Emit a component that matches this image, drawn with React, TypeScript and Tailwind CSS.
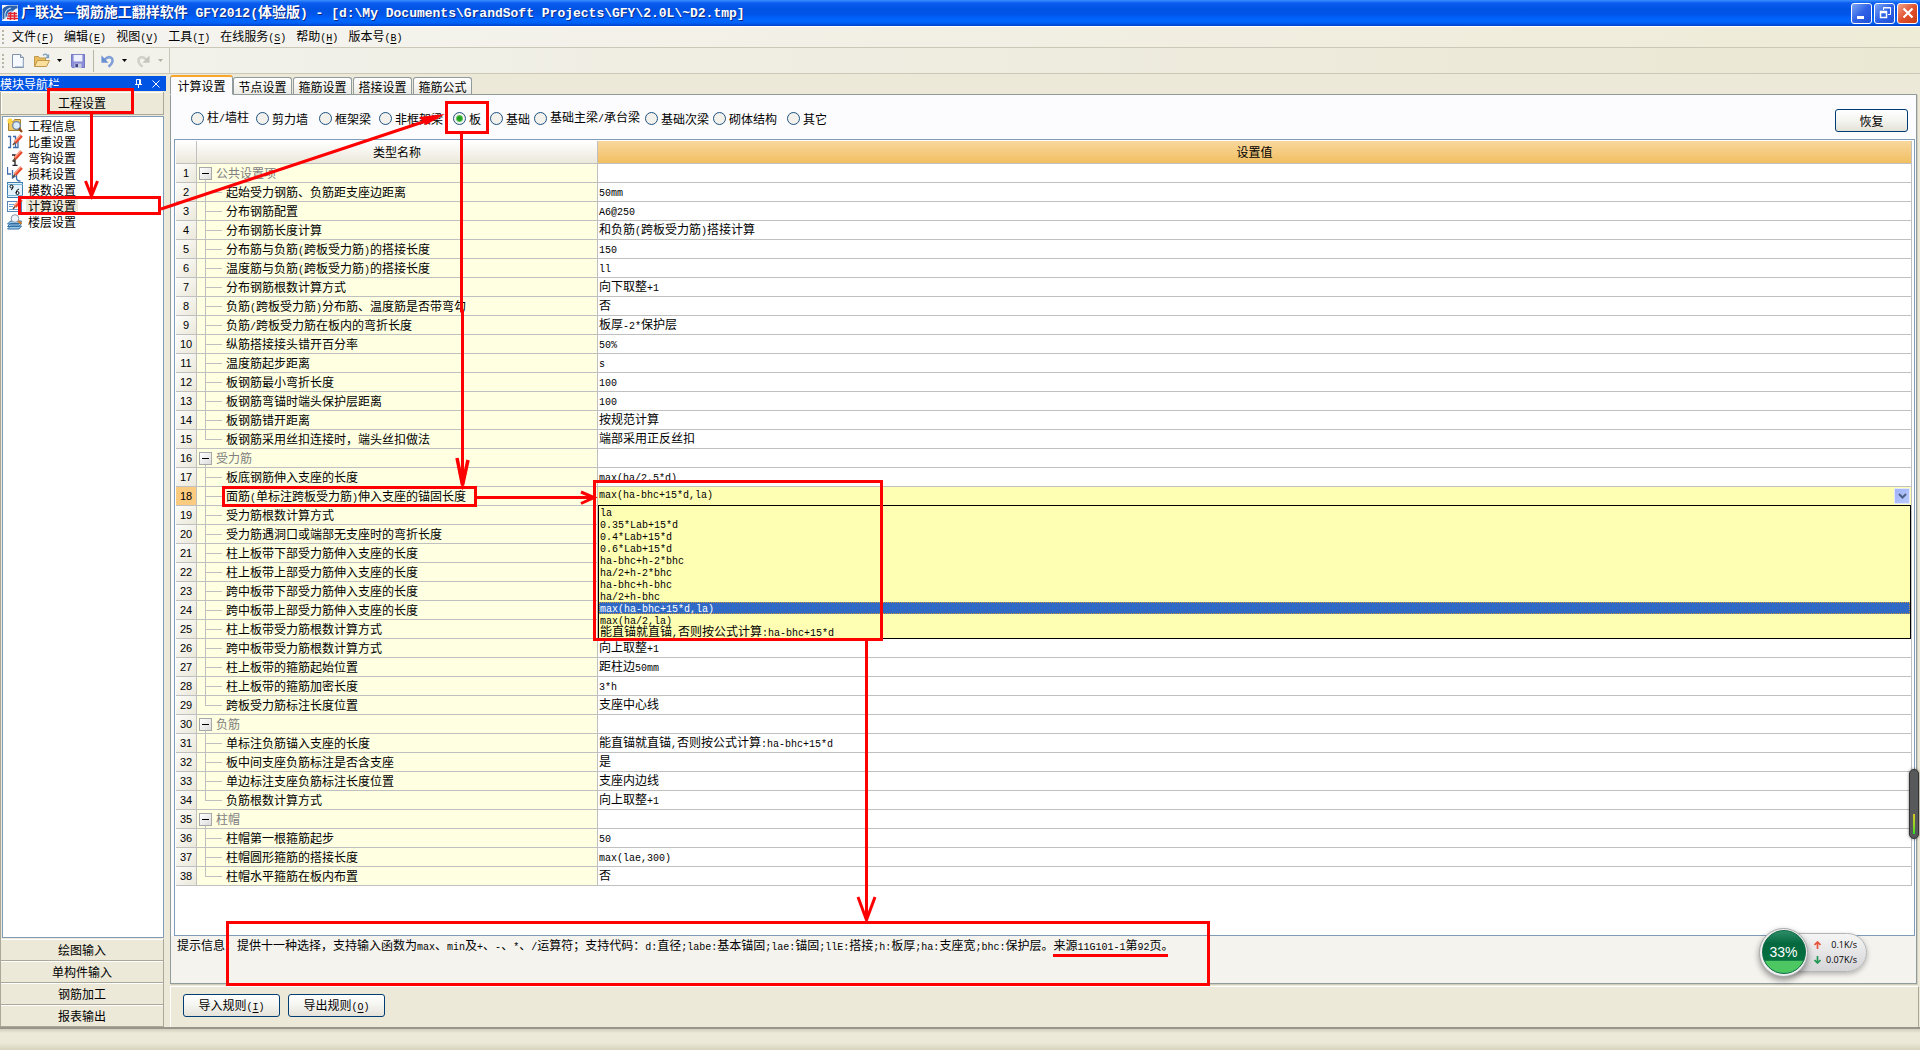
import React from "react";

/* Mixed text: half-width characters take half of a full-width character's advance. */
function T({ s, big = false }: { s: string; big?: boolean }) {
  return (
    <>
      {s.split(/([\x20-\x7e]+)/).map((part, i) =>
        i % 2 ? (
          <span
            key={i}
            className={
              big
                ? "text-[13px] font-['Liberation_Mono',monospace] whitespace-pre"
                : "text-[10px] font-['Liberation_Mono',monospace] whitespace-pre"
            }
          >
            {part}
          </span>
        ) : (
          part
        )
      )}
    </>
  );
}

/* Label followed by an underlined access key in brackets. */
function Keyed({ text, k }: { text: string; k: string }) {
  return (
    <>
      {text}
      <span className="text-[10px] font-['Liberation_Mono',monospace]">
        (<u className="underline-offset-2">{k}</u>)
      </span>
    </>
  );
}

type Row = { name: string; value?: string; group?: boolean };

const rows: Row[] = [
  { name: "公共设置项", group: true },
  { name: "起始受力钢筋、负筋距支座边距离", value: "50mm" },
  { name: "分布钢筋配置", value: "A6@250" },
  { name: "分布钢筋长度计算", value: "和负筋(跨板受力筋)搭接计算" },
  { name: "分布筋与负筋(跨板受力筋)的搭接长度", value: "150" },
  { name: "温度筋与负筋(跨板受力筋)的搭接长度", value: "ll" },
  { name: "分布钢筋根数计算方式", value: "向下取整+1" },
  { name: "负筋(跨板受力筋)分布筋、温度筋是否带弯勾", value: "否" },
  { name: "负筋/跨板受力筋在板内的弯折长度", value: "板厚-2*保护层" },
  { name: "纵筋搭接接头错开百分率", value: "50%" },
  { name: "温度筋起步距离", value: "s" },
  { name: "板钢筋最小弯折长度", value: "100" },
  { name: "板钢筋弯锚时端头保护层距离", value: "100" },
  { name: "板钢筋错开距离", value: "按规范计算" },
  { name: "板钢筋采用丝扣连接时，端头丝扣做法", value: "端部采用正反丝扣" },
  { name: "受力筋", group: true },
  { name: "板底钢筋伸入支座的长度", value: "max(ha/2,5*d)" },
  { name: "面筋(单标注跨板受力筋)伸入支座的锚固长度", value: "max(ha-bhc+15*d,la)" },
  { name: "受力筋根数计算方式" },
  { name: "受力筋遇洞口或端部无支座时的弯折长度" },
  { name: "柱上板带下部受力筋伸入支座的长度" },
  { name: "柱上板带上部受力筋伸入支座的长度" },
  { name: "跨中板带下部受力筋伸入支座的长度" },
  { name: "跨中板带上部受力筋伸入支座的长度" },
  { name: "柱上板带受力筋根数计算方式" },
  { name: "跨中板带受力筋根数计算方式", value: "向上取整+1" },
  { name: "柱上板带的箍筋起始位置", value: "距柱边50mm" },
  { name: "柱上板带的箍筋加密长度", value: "3*h" },
  { name: "跨板受力筋标注长度位置", value: "支座中心线" },
  { name: "负筋", group: true },
  { name: "单标注负筋锚入支座的长度", value: "能直锚就直锚,否则按公式计算:ha-bhc+15*d" },
  { name: "板中间支座负筋标注是否含支座", value: "是" },
  { name: "单边标注支座负筋标注长度位置", value: "支座内边线" },
  { name: "负筋根数计算方式", value: "向上取整+1" },
  { name: "柱帽", group: true },
  { name: "柱帽第一根箍筋起步", value: "50" },
  { name: "柱帽圆形箍筋的搭接长度", value: "max(lae,300)" },
  { name: "柱帽水平箍筋在板内布置", value: "否" },
];

const SELECTED = 17;

const options = [
  "la",
  "0.35*Lab+15*d",
  "0.4*Lab+15*d",
  "0.6*Lab+15*d",
  "ha-bhc+h-2*bhc",
  "ha/2+h-2*bhc",
  "ha-bhc+h-bhc",
  "ha/2+h-bhc",
  "max(ha-bhc+15*d,la)",
  "max(ha/2,la)",
  "能直锚就直锚,否则按公式计算:ha-bhc+15*d",
];

const menus: [string, string][] = [
  ["文件", "F"],
  ["编辑", "E"],
  ["视图", "V"],
  ["工具", "T"],
  ["在线服务", "S"],
  ["帮助", "H"],
  ["版本号", "B"],
];

const tabs = ["计算设置", "节点设置", "箍筋设置", "搭接设置", "箍筋公式"];
const radios = ["柱/墙柱", "剪力墙", "框架梁", "非框架梁", "板", "基础", "基础主梁/承台梁", "基础次梁", "砌体结构", "其它"];

const pencil = (
  <>
    <path d="M14.500 1.500 8 8.500" stroke="#e8492c" strokeWidth="3.500" />
    <path d="M13.500 1 7.500 7.500" stroke="#ffb199" strokeWidth="1.200" />
    <path d="M8 8.500 6 11" stroke="#6b4a2c" strokeWidth="1.500" />
  </>
);

const navItems: { label: string; icon: React.ReactNode }[] = [
  {
    label: "工程信息",
    icon: (
      <>
        <path d="M1.500 3.500h5l1-2h6v11h-12z" fill="#f0c863" stroke="#a8802c" />
        <path d="M0 3h6M3 0v6M1 1l4 4M5 1 1 5" stroke="#ffd640" strokeWidth="1.200" />
        <circle cx="9.500" cy="7.500" r="3.800" fill="#dcebfb" stroke="#6f87a4" strokeWidth="1.300" />
        <path d="m12 10.500 3 3.500" stroke="#8c4a18" strokeWidth="2.200" />
      </>
    ),
  },
  {
    label: "比重设置",
    icon: (
      <>
        <path d="M1 2.500h2.500v11H1M6 2.500h2.500v11H6M11 7v6.500H9" fill="none" stroke="#3c6cab" strokeWidth="1.300" />
        {pencil}
      </>
    ),
  },
  {
    label: "弯钩设置",
    icon: (
      <>
        <path d="M5 5h3v10M5.500 15.500h5M5.500 11h3" fill="none" stroke="#222" strokeWidth="1.300" />
        {pencil}
      </>
    ),
  },
  {
    label: "损耗设置",
    icon: (
      <>
        <path d="M0.500 1v7h3.500M5.500 4v8l3-2M9.500 8v4q0 3 4 3" fill="none" stroke="#3c6cab" strokeWidth="1.300" />
        {pencil}
      </>
    ),
  },
  {
    label: "模数设置",
    icon: (
      <>
        <rect x="0.500" y="0.500" width="15" height="15" fill="#e4f3fb" stroke="#3d7fae" />
        <path d="M0 2.500h16M0 13.500h16" stroke="#77b4d8" />
        <circle cx="4.500" cy="4.500" r="1.500" fill="none" stroke="#111" />
        <path d="M6 4.500q0 3-2 3.500M12 7q-3 1-3 4" fill="none" stroke="#111" />
        <circle cx="10.500" cy="11" r="1.500" fill="none" stroke="#111" />
      </>
    ),
  },
  {
    label: "计算设置",
    icon: (
      <>
        <rect x="0.500" y="3.500" width="14" height="10" fill="#fff" stroke="#5585bd" />
        <path d="M2 6.500h5M2 8.500h4M2 11.500h10" stroke="#6f9fd4" />
        {pencil}
      </>
    ),
  },
  {
    label: "楼层设置",
    icon: (
      <>
        <path d="m0.500 15 3-3h11l-2.500 3zM0.500 12.500l3-3h11l-2.500 3zM0.500 10l3-3h11l-2.500 3z" fill="#9fcbe8" stroke="#2f6fa4" />
        <circle cx="8" cy="4.500" r="3.800" fill="#eef4fb" stroke="#8796a8" />
        <path d="m11 7 3.500 2.500" stroke="#d08030" strokeWidth="2.200" />
      </>
    ),
  },
];

function Glyph({ children, size = 16 }: { children: React.ReactNode; size?: number }) {
  return (
    <svg width={size} height={size} viewBox="0 0 16 16" className="block shrink-0" aria-hidden="true">
      {children}
    </svg>
  );
}

function Caret({ muted = false }: { muted?: boolean }) {
  return (
    <svg width="5" height="3" viewBox="0 0 5 3" aria-hidden="true" className="block">
      <path d="M0 0h5L2.500 3z" fill={muted ? "#b5b2a3" : "#000"} />
    </svg>
  );
}

function TitleBar() {
  const ctl =
    "grid size-[21px] place-items-center rounded-[3px] border border-white bg-gradient-to-br from-[#7ea4f4] via-[#2f62e6] to-[#1f50d8]";
  return (
    <header className="flex h-[26px] items-center bg-[linear-gradient(#3b90ff_0,#0b5df0_3px,#0054e3_9px,#0055ea_14px,#0066ff_20px,#0061f5_23px,#0040c8_26px)] pr-0.5 pl-0.5">
      <Glyph>
        <rect width="16" height="16" fill="#f7f8fb" />
        <path d="M0.500 15V4Q3 0.500 8 0.500h7.500v3H14" fill="#2b62ae" />
        <path d="M3 14V9q1-5 6-6M5.500 14v-4q1-4 5-4" stroke="#b9dcf5" strokeWidth="1.200" fill="none" />
        <path d="M6 8.500h9M5.500 11h10M5 13.500h11M8.500 7v8M12.500 7v8" stroke="#e0202c" strokeWidth="1.400" />
      </Glyph>
      <h1 className="ml-[3px] flex-1 pb-0.5 text-[14px] leading-[18px] font-bold whitespace-nowrap text-white [text-shadow:1px_1px_0_#0a2a86]">
        <T big s={"广联达—钢筋施工翻样软件 GFY2012(体验版) - [d:\\My Documents\\GrandSoft Projects\\GFY\\2.0L\\~D2.tmp]"} />
      </h1>
      <div className="flex gap-0.5">
        <button type="button" aria-label="最小化" className={ctl}>
          <Glyph>
            <path d="M3 11h7v3H3z" fill="#fff" />
          </Glyph>
        </button>
        <button type="button" aria-label="还原" className={ctl}>
          <Glyph>
            <path d="M6.500 5V2.500h7v7H11M6 3h8" fill="none" stroke="#fff" />
            <path d="M3.500 6.500h6v6h-6zM3 7.500h7" fill="none" stroke="#fff" strokeWidth="1.500" />
          </Glyph>
        </button>
        <button
          type="button"
          aria-label="关闭"
          className="grid size-[21px] place-items-center rounded-[3px] border border-white bg-gradient-to-br from-[#f0a088] via-[#e1512c] to-[#c83c14]"
        >
          <Glyph>
            <path d="m3.500 3.500 9 9m0-9-9 9" stroke="#fff" strokeWidth="2.200" />
          </Glyph>
        </button>
      </div>
    </header>
  );
}

function Grip() {
  return (
    <span className="flex w-[10px] flex-col items-center gap-0.5 self-center pr-1" aria-hidden="true">
      {[0, 1, 2, 3].map((i) => (
        <span key={i} className="size-[2px] bg-[#b8b5a4]" />
      ))}
    </span>
  );
}

function MenuBar() {
  return (
    <nav className="flex h-[22px] items-center border-t border-b border-t-white border-b-[#cbc8b8] bg-gradient-to-r from-[#f5f4f1] to-[#eeebd7]">
      <Grip />
      <div className="flex gap-[10px] pl-0.5">
        {menus.map(([t, k]) => (
          <button key={k} type="button" className="leading-[18px] whitespace-nowrap">
            <Keyed text={t} k={k} />
          </button>
        ))}
      </div>
    </nav>
  );
}

function ToolBar() {
  return (
    <div className="flex h-[26px] border-b border-[#cbc8b8] bg-gradient-to-r from-[#f3f2ec] to-[#eae7d3]">
      <div className="flex w-[170px] items-center border-r border-[#cbc8b8]">
        <Grip />
        <button type="button" aria-label="新建" className="w-[24px]">
          <Glyph>
            <path d="M2.500 1.500h8l3 3v10h-11z" fill="#f6faff" stroke="#8192ab" />
            <path d="M10.500 1.500v3h3" fill="#cfdbea" stroke="#8192ab" />
            <path d="M5 13.500h8v-7" stroke="#b9c9de" fill="none" />
          </Glyph>
        </button>
        <button type="button" aria-label="打开" className="w-[23px]">
          <Glyph>
            <path d="M0.500 13.500v-10h4l1 1.500h6v3" fill="#e9bd5c" stroke="#c09a4c" />
            <path d="m0.500 13.500 3-6h12l-3 6z" fill="#fbdf9c" stroke="#c09a4c" />
            <path d="M9 2.500q3-3 5 1m0.500-2v3h-3" fill="none" stroke="#7f9fbf" strokeWidth="1.300" />
          </Glyph>
        </button>
        <button type="button" aria-label="打开选项" className="w-[14px]">
          <Caret />
        </button>
        <button type="button" aria-label="保存" className="w-[22px]">
          <Glyph size={14}>
            <path d="M0.500 0.500h15v15h-14l-1-1z" fill="#8a8ed8" stroke="#6569bd" />
            <path d="M3 1h10v7.500H3z" fill="#eef1fb" />
            <path d="M4 11h8v5H4z" fill="#c6c9de" />
            <path d="M5 11.500h3V15H5z" fill="#3f4388" />
          </Glyph>
        </button>
        <span className="mr-[7px] h-[22px] w-px bg-[#b9b6a6]" />
        <button type="button" aria-label="撤销" className="w-[21px]">
          <Glyph size={14}>
            <path d="M4 6.500q5-5 8.500-1.500 2.500 5-4 9.500" fill="none" stroke="#7f9fd6" strokeWidth="2.800" />
            <path d="M0.500 1.500v8.500h8z" fill="#6a90d2" />
          </Glyph>
        </button>
        <button type="button" aria-label="撤销选项" className="w-[14px]">
          <Caret />
        </button>
        <button type="button" aria-label="重做" className="w-[22px]" disabled>
          <Glyph size={14}>
            <path d="M12 6.500q-5-5-8.500-1.500-2.500 5 4 9.500" fill="none" stroke="#d2d0c8" strokeWidth="2.800" />
            <path d="M15.500 1.500v8.500h-8z" fill="#c6c4bb" />
          </Glyph>
        </button>
        <button type="button" aria-label="重做选项" disabled>
          <Caret muted />
        </button>
      </div>
    </div>
  );
}

function Sidebar() {
  return (
    <aside className="flex w-[166px] shrink-0 flex-col pt-0.5">
      <div className="flex h-[15px] items-center bg-[#0054e3] text-white">
        <h2 className="flex-1 leading-[15px]">模块导航栏</h2>
        <button type="button" aria-label="固定" className="mr-[10px]">
          <svg width="7" height="9" viewBox="0 0 7 9" className="block" aria-hidden="true">
            <path d="M1.500 5V0.500h4V5M0 5.500h7M3.500 5.500V9M4.500 1v4" fill="none" stroke="#fff" />
          </svg>
        </button>
        <button type="button" aria-label="关闭导航栏" className="mr-[6px]">
          <svg width="8" height="8" viewBox="0 0 8 8" className="block" aria-hidden="true">
            <path d="m0.500 0.500 7 7m0-7-7 7" stroke="#fff" />
          </svg>
        </button>
      </div>
      <div className="mt-px mr-0.5 flex flex-1 flex-col border-l border-[#aca899]">
        <button
          type="button"
          className="h-[23px] border-r border-b border-r-[#aca899] border-b-[#aca899] bg-[#ece9d8] text-center leading-[22px] shadow-[inset_1px_1px_0_#fff]"
        >
          工程设置
        </button>
        <ul className="mt-px ml-px flex-1 border border-[#7f9db9] bg-white pt-px">
          {navItems.map((n) => (
            <li key={n.label}>
              <button type="button" className="flex h-[16px] w-full items-center gap-[3px] pl-1">
                <Glyph>{n.icon}</Glyph>
                <span className={n.label === "计算设置" ? "bg-[#ece9d8] px-0.5 leading-[14px]" : "px-0.5 leading-[14px]"}>
                  {n.label}
                </span>
              </button>
            </li>
          ))}
        </ul>
        <div className="flex flex-col pt-px">
          {["绘图输入", "单构件输入", "钢筋加工", "报表输出"].map((t) => (
            <button
              key={t}
              type="button"
              className="h-[22px] border-r border-b border-[#aca899] text-center leading-[21px] shadow-[inset_0_1px_0_#fff]"
            >
              {t}
            </button>
          ))}
        </div>
      </div>
    </aside>
  );
}

function PushButton({ children, className }: { children: React.ReactNode; className: string }) {
  return (
    <button
      type="button"
      className={
        "h-[23px] rounded-[3px] border border-[#003c74] bg-gradient-to-b from-white via-[#f4f4f0] to-[#e4e2d8] text-center leading-[20px] " +
        className
      }
    >
      {children}
    </button>
  );
}

function TreeCell({ row, last }: { row: Row; last: boolean }) {
  if (row.group) {
    return (
      <div className="flex h-[18px] pl-0.5">
        <div className="flex w-[13px] flex-col">
          <button
            type="button"
            aria-label={"折叠" + row.name}
            className="mt-[3px] grid size-[13px] shrink-0 place-items-center border border-[#a8a8a8] bg-gradient-to-br from-white to-[#dcdcdc]"
          >
            <span className="h-px w-[7px] bg-black" />
          </button>
          <span className="ml-[6px] w-px flex-1 bg-[#c0c0c0]" />
        </div>
        <span className="pl-1 leading-[18px] text-[#808080]">{row.name}</span>
      </div>
    );
  }
  return (
    <div className="flex h-[18px] pl-2">
      <div className="flex w-[17px] flex-col" aria-hidden="true">
        <span className="h-[10px] border-b border-l border-[#c0c0c0]" />
        {last ? null : <span className="flex-1 border-l border-[#c0c0c0]" />}
      </div>
      <span className="pl-1 leading-[18px] whitespace-nowrap">
        <T s={row.name} />
      </span>
    </div>
  );
}

function ComboCell({ value }: { value: string }) {
  return (
    <div className="relative bg-[#ffffb4]">
      <div className="flex h-[18px] items-center">
        <input
          aria-label="面筋伸入支座的锚固长度"
          defaultValue={value}
          className="min-w-0 flex-1 bg-transparent pl-px font-['Liberation_Mono',monospace] text-[10px] leading-[16px] outline-none"
        />
        <button
          type="button"
          aria-label="展开选项"
          className="mr-px grid size-[16px] place-items-center border border-[#e4e9fb] bg-gradient-to-br from-[#9fb2f8] to-[#b9cbfb]"
        >
          <svg width="9" height="6" viewBox="0 0 9 6" className="block" aria-hidden="true">
            <path d="m1 1 3.500 3.500L8 1" fill="none" stroke="#4d6185" strokeWidth="2" />
          </svg>
        </button>
      </div>
      <ul role="listbox" aria-label="计算公式" className="absolute top-[18px] right-0 left-0 z-10 border border-black bg-[#ffffb4]">
        {options.map((o) => (
          <li
            key={o}
            role="option"
            aria-selected={o === value}
            className={
              o === value
                ? "h-[12px] bg-[#316ac5] pl-px leading-[10px] text-white outline-1 -outline-offset-1 outline-dotted outline-[#ce953a]"
                : "h-[12px] pl-px leading-[10px]"
            }
          >
            <T s={o} />
          </li>
        ))}
      </ul>
    </div>
  );
}

function SettingsTable() {
  return (
    <table className="w-full table-fixed border-separate border-spacing-0">
      <colgroup>
        <col className="w-[21px]" />
        <col className="w-[401px]" />
        <col />
      </colgroup>
      <thead>
        <tr className="h-[23px]">
          <td className="border-r border-b border-[#c0c0c0] bg-gradient-to-b from-white to-[#ebe8da] p-0" />
          <th className="border-r border-b border-[#c0c0c0] bg-gradient-to-b from-white to-[#ebe8da] p-0 font-normal">类型名称</th>
          <th className="border-r border-b border-[#c0c0c0] bg-gradient-to-b from-[#f9d79c] to-[#f1bf60] p-0 font-normal">设置值</th>
        </tr>
      </thead>
      <tbody>
        {rows.map((r, i) => {
          const last = i === rows.length - 1 || !!rows[i + 1].group;
          return (
            <tr key={i} className="h-[19px]">
              <th
                scope="row"
                className={
                  i === SELECTED
                    ? "border-r border-b border-[#c0c0c0] bg-[#fbcb80] p-0 font-['Liberation_Sans',sans-serif] text-[11px] leading-[18px] font-normal"
                    : "border-r border-b border-[#c0c0c0] bg-gradient-to-br from-[#fdfdfb] to-[#ebe8da] p-0 font-['Liberation_Sans',sans-serif] text-[11px] leading-[18px] font-normal"
                }
              >
                {i + 1}
              </th>
              <td className="border-r border-b border-[#c0c0c0] bg-[#ffffe1] p-0">
                <TreeCell row={r} last={last} />
              </td>
              <td className="border-r border-b border-[#c0c0c0] bg-white p-0">
                {i === SELECTED ? (
                  <ComboCell value={r.value!} />
                ) : (
                  <div className="h-[18px] pl-px leading-[16px] whitespace-nowrap">
                    <T s={r.value ?? ""} />
                  </div>
                )}
              </td>
            </tr>
          );
        })}
      </tbody>
    </table>
  );
}

function MainPanel() {
  return (
    <main className="ml-1 flex min-w-0 flex-1 flex-col">
      <div className="mr-[3px] flex flex-1 flex-col">
        <div role="tablist" className="flex h-[20px] items-end gap-px pt-px">
          {tabs.map((t, i) => (
            <button
              key={t}
              type="button"
              role="tab"
              aria-selected={i === 0}
              className={
                i === 0
                  ? "relative -mr-px h-[20px] w-[63px] translate-y-px rounded-t-[3px] border border-t-2 border-[#919b9c] border-t-[#f9a52c] border-b-[#fcfcfe] bg-[#fcfcfe] text-center leading-[16px]"
                  : "h-[17px] w-[59px] rounded-t-[3px] border border-b-0 border-[#919b9c] bg-gradient-to-b from-white to-[#ecebe5] text-center leading-[17px]"
              }
            >
              {t}
            </button>
          ))}
        </div>
        <section className="flex flex-1 flex-col border border-[#919b9c] bg-[#fcfcfe] shadow-[1px_1px_0_#d0cebf]">
          <div className="flex h-[44px] items-center justify-between pr-2 pl-5">
            <div
              role="radiogroup"
              aria-label="构件类型"
              className="grid grid-cols-[65px_63px_60px_74px_37px_44px_111px_68px_74px_auto] pt-[3px]"
            >
              {radios.map((r) => (
                <label key={r} className="flex items-center gap-[3px] leading-[16px] whitespace-nowrap">
                  <input
                    type="radio"
                    name="member"
                    defaultChecked={r === "板"}
                    className="size-[13px] appearance-none rounded-full border border-[#1d5281] bg-[#f2f1ec] checked:bg-[radial-gradient(circle,#21a121_0_2px,#5fc45f_3px,#f2f1ec_4px)]"
                  />
                  <span>
                    <T s={r} />
                  </span>
                </label>
              ))}
            </div>
            <PushButton className="mt-[7px] w-[73px]">恢复</PushButton>
          </div>
          <div className="mr-px ml-[3px] flex-1 border border-[#7f9db9] bg-white pt-px pr-0.5 pb-[48px] pl-px">
            <SettingsTable />
          </div>
          <p className="h-[47px] bg-[#f4f3ee] pl-[6px] leading-[18px] whitespace-nowrap">
            <T s="提示信息：提供十一种选择，支持输入函数为max、min及+、-、*、/运算符；支持代码：d:直径;labe:基本锚固;lae:锚固;llE:搭接;h:板厚;ha:支座宽;bhc:保护层。来源11G101-1第92页。" />
          </p>
        </section>
      </div>
      <div className="mt-0.5 mr-px flex h-[41px] gap-2 border-t border-r border-l border-t-white border-r-[#aca899] border-l-white pt-[7px] pl-3">
        <PushButton className="w-[97px]">
          <Keyed text="导入规则" k="I" />
        </PushButton>
        <PushButton className="w-[97px]">
          <Keyed text="导出规则" k="O" />
        </PushButton>
      </div>
    </main>
  );
}

function TrafficWidget() {
  return (
    <div className="absolute top-[927px] right-[53px] flex h-[50px] items-center">
      <div className="z-10 -mr-[26px] grid size-[49px] place-items-center rounded-full border border-[#a9a9a9] bg-[#efefef] shadow-[0_3px_6px_#0006]">
        <div className="grid size-[44px] place-items-center rounded-full border border-[#0a6a45] bg-[linear-gradient(#2d8d66_0,#04683f_30%,#04703f_70%,#4cc761_71%)] font-['Liberation_Sans',sans-serif] text-[14px] leading-none text-white">
          33%
        </div>
      </div>
      <div className="flex h-[39px] w-[85px] flex-col justify-center rounded-r-full border border-[#b5b5b5] bg-gradient-to-b from-[#f5f5f5] to-[#d5d5d8] pr-[9px] pl-[31px] font-['Open_Sans',sans-serif] text-[9px] leading-[15px] shadow-[0_2px_5px_#0004]">
        {[
          ["0.1K/s", "#e8553a", "M3.500 8V1M0.500 4l3-3 3 3"],
          ["0.07K/s", "#219653", "M3.500 0v7M0.500 4l3 3 3-3"],
        ].map(([t, c, d]) => (
          <div key={t} className="flex items-center">
            <svg width="7" height="8" viewBox="0 0 7 8" className="block shrink-0" aria-hidden="true">
              <path d={d} fill="none" stroke={c} strokeWidth="1.700" />
            </svg>
            <span className="flex-1 text-right whitespace-nowrap">{t}</span>
          </div>
        ))}
      </div>
    </div>
  );
}

/* Red guide marks drawn over the window. */
function Annotations() {
  return (
    <svg
      width="1230"
      height="1000"
      viewBox="0 0 1230 1000"
      className="pointer-events-none absolute top-0 left-0 z-20"
      fill="none"
      stroke="#ff0000"
      strokeWidth="3"
      aria-hidden="true"
    >
      <rect x="48.500" y="89.500" width="84" height="23" />
      <path d="M91.500 114v80M85.500 181l6 15 6-15" />
      <rect x="19.500" y="197.500" width="140" height="16" />
      <path d="M161 209 438 117" />
      <path d="m419 117 26-3-19 11z" fill="#ff0000" stroke="none" />
      <rect x="446.500" y="102.500" width="41" height="30" />
      <path d="M461.500 134v177l1 0v170" />
      <path d="M457 458l5.500 27L468 460" strokeWidth="3.500" />
      <path d="m458 470 4.500 21 4.500-21z" fill="#ff0000" stroke="none" />
      <rect x="223.500" y="487.500" width="252" height="18" />
      <path d="M477 497.500h115M581 492l13 5.500-13 6" />
      <rect x="594.500" y="481.500" width="287" height="158" />
      <path d="M866.500 640v280M858 897l8.500 23 8.500-23" />
      <rect x="227.500" y="922.500" width="981" height="62" />
      <path d="M1053 955.500h115" />
    </svg>
  );
}

export default function App() {
  return (
    <div className="relative flex min-h-screen flex-col overflow-hidden bg-[#ece9d8] font-['Noto_Sans_CJK_SC',sans-serif] text-[12px] leading-[16px] text-black">
      <TitleBar />
      <MenuBar />
      <ToolBar />
      <div className="flex flex-1">
        <Sidebar />
        <MainPanel />
      </div>
      <footer className="h-[23px] border-t-2 border-[#98958a] bg-[linear-gradient(#d2cfbf_0,#ece9d8_4px,#ece9d8_14px,#d8d5c0_20px)]" />
      <TrafficWidget />
      <div className="absolute top-[769px] right-px flex h-[70px] w-[10px] items-end justify-center rounded-full border border-[#333] bg-[#58595b] pb-1 shadow-[0_0_3px_#0008]">
        <span className="h-[20px] w-[2px] bg-gradient-to-b from-[#d8c820] to-[#10e020]" />
      </div>
      <Annotations />
    </div>
  );
}
